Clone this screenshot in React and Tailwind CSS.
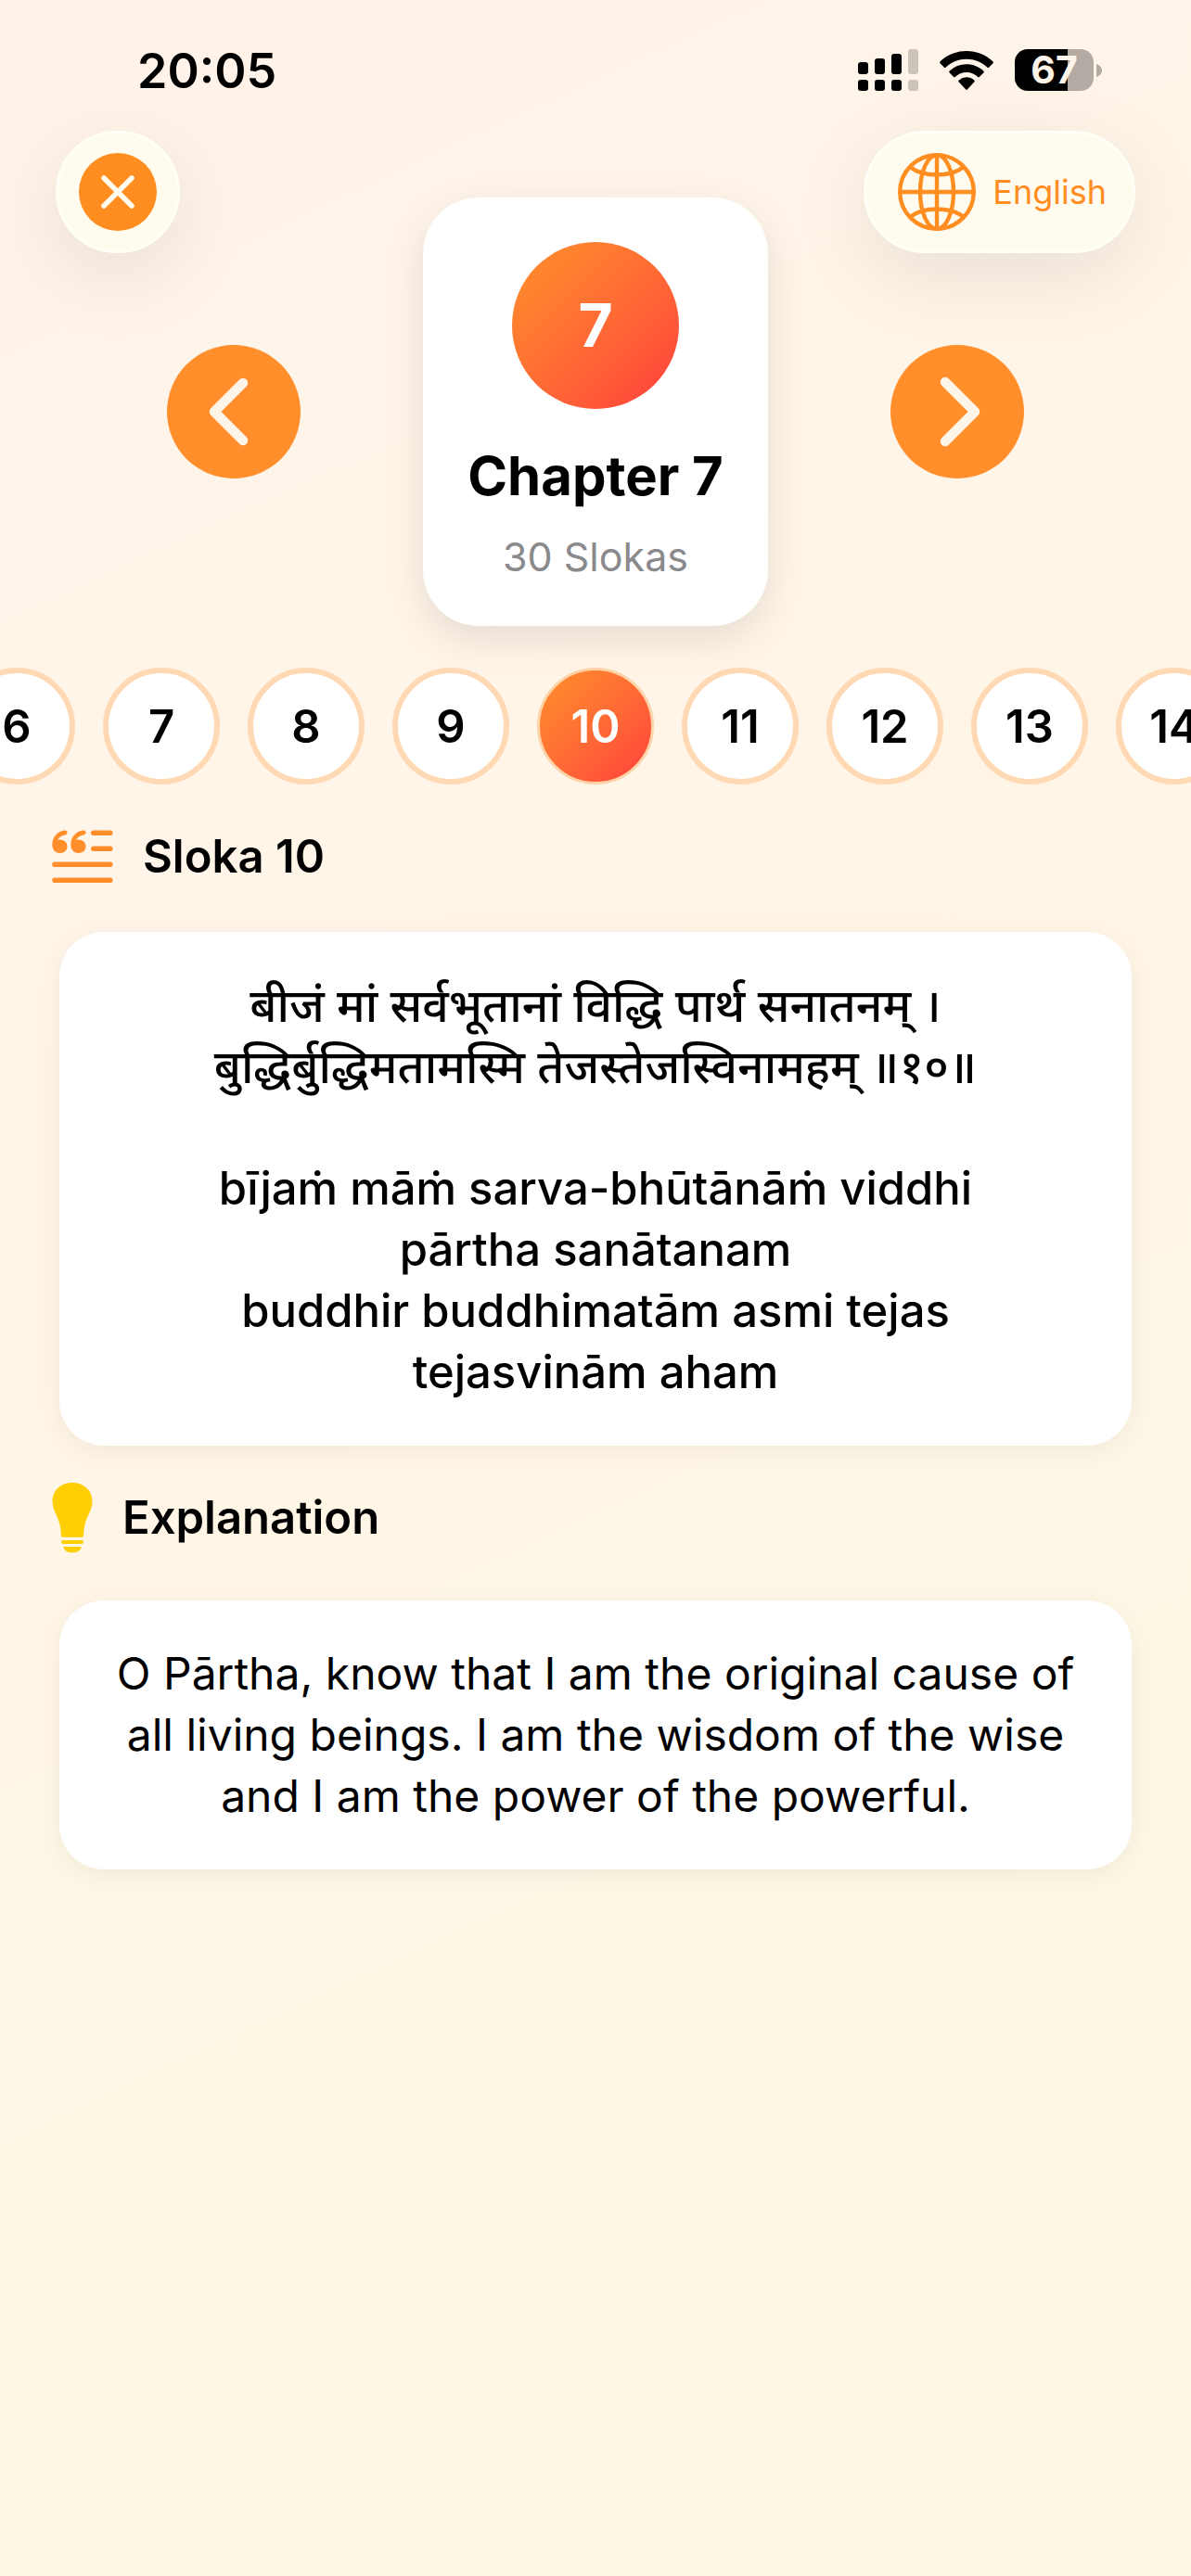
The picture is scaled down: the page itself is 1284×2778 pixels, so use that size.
import React, { useState } from "react";

const CHAPTER = { number: 7, slokas: 30 };
const SLOKA_NUMBERS = [6, 7, 8, 9, 10, 11, 12, 13, 14];

const VERSE = [
  "बीजं मां सर्वभूतानां विद्धि पार्थ सनातनम् ।",
  "बुद्धिर्बुद्धिमतामस्मि तेजस्तेजस्विनामहम् ॥१०॥",
];

const TRANSLITERATION = [
  "bījaṁ māṁ sarva-bhūtānāṁ viddhi",
  "pārtha sanātanam",
  "buddhir buddhimatām asmi tejas",
  "tejasvinām aham",
];

function SignalIcon() {
  return (
    <svg width="65" height="45" viewBox="0 0 65 45">
      <rect x="0" y="14" width="11" height="13" rx="3" />
      <rect x="18" y="10" width="11" height="17" rx="3" />
      <rect x="36" y="5" width="11" height="22" rx="3" />
      <rect x="54" y="0" width="11" height="27" rx="3" opacity="0.2" />
      <rect x="0" y="33" width="11" height="12" rx="3" />
      <rect x="18" y="33" width="11" height="12" rx="3" />
      <rect x="36" y="33" width="11" height="12" rx="3" />
      <rect x="54" y="33" width="11" height="12" rx="3" opacity="0.2" />
    </svg>
  );
}

function WifiIcon() {
  return (
    <svg width="58" height="43" viewBox="0 0 58 43">
      <path d="M29 1C40 1 50 5.200 57.300 12.200a1.500 1.500 0 0 1 0 2.200l-4 4a1.500 1.500 0 0 1-2.100 0C45.300 13 37.500 9.700 29 9.700S12.700 13 6.800 18.400a1.500 1.500 0 0 1-2.100 0l-4-4a1.500 1.500 0 0 1 0-2.200C8 5.200 18 1 29 1z" />
      <path d="M29 15.200c7 0 13.500 2.700 18.300 7.200a1.500 1.500 0 0 1 0 2.200l-4.200 4.100a1.500 1.500 0 0 1-2.100 0A17.600 17.600 0 0 0 29 24c-4.600 0-8.800 1.700-12 4.700a1.500 1.500 0 0 1-2.100 0l-4.200-4.100a1.500 1.500 0 0 1 0-2.200A26.600 26.600 0 0 1 29 15.200z" />
      <path d="M29 29.300c3.200 0 6 1.200 8.200 3.100a1.400 1.400 0 0 1 0 2.100l-7.200 7.700a1.400 1.400 0 0 1-2 0l-7.200-7.700a1.400 1.400 0 0 1 0-2.100 12.400 12.400 0 0 1 8.200-3.100z" />
    </svg>
  );
}

function Battery({ level }) {
  return (
    <div className="flex items-center gap-[3px]">
      <div className="flex h-[45px] w-[85px] items-center justify-center rounded-[14px] bg-[linear-gradient(to_right,#000_67%,#b3aba3_67%)] text-[41px] leading-[45px] font-bold text-[#fff4e9]">
        {level}
      </div>
      <svg width="6" height="14" viewBox="0 0 6 14" fill="#b3aba3">
        <path d="M0 0c3.600 1.200 6 4 6 7s-2.400 5.800-6 7z" />
      </svg>
    </div>
  );
}

function CloseIcon() {
  return (
    <svg width="84" height="84" viewBox="0 0 84 84">
      <circle cx="42" cy="42" r="42" fill="#ff8d1f" />
      <path d="M27 27l30 30M57 27L27 57" stroke="#fffbee" strokeWidth="5.500" strokeLinecap="round" />
    </svg>
  );
}

function GlobeIcon() {
  return (
    <svg width="84" height="84" viewBox="0 0 84 84" fill="none" stroke="#ff8d1f" strokeWidth="4.400">
      <circle cx="42" cy="42" r="39.800" />
      <ellipse cx="42" cy="42" rx="18" ry="39.800" />
      <path d="M42 2v80M2 42h80" />
      <path d="M13 15c7 5.500 17 8.500 29 8.500S64 20.500 71 15M13 69c7-5.500 17-8.500 29-8.500S64 63.500 71 69" />
    </svg>
  );
}

function ChevronCircle({ direction }) {
  return (
    <svg width="144" height="144" viewBox="0 0 144 144" fill="none">
      <circle cx="72" cy="72" r="72" fill="#ff8e2b" />
      <path
        d={direction === "left" ? "M82 41L51 72l31 31" : "M59 40l32 32-32 32"}
        stroke="#fff4e8"
        strokeWidth="10.500"
        strokeLinecap="round"
        strokeLinejoin="round"
      />
    </svg>
  );
}

function QuoteIcon() {
  return (
    <svg width="66" height="58" viewBox="0 0 66 58" fill="#ff8e2b">
      <path d="M8.500 10.600C13 10.600 16.500 13.600 16.500 17.800c0 4.200-3.400 7.200-8 7.200C3.400 25 .3 21.300.3 15.800.3 8 5.600 2 13 .6c2-.4 3.500.4 3.600 2 .1 1.500-.8 2.500-2.600 2.900C10 6.300 7 8.300 6 11.100c.7-.4 1.500-.5 2.500-.5z" />
      <path d="M28.500 10.600c4.500 0 8 3 8 7.200 0 4.200-3.400 7.200-8 7.200-5.100 0-8.200-3.700-8.200-9.200C20.300 8 25.600 2 33 .6c2-.4 3.500.4 3.600 2 .1 1.500-.8 2.500-2.600 2.900-4 .8-7 2.800-8 5.600.7-.4 1.500-.5 2.500-.5z" />
      <rect x="42" y="0.500" width="23.500" height="5.600" rx="2.800" />
      <rect x="42" y="17.500" width="23.500" height="5.600" rx="2.800" />
      <rect x="0.300" y="34.500" width="65.200" height="5.600" rx="2.800" />
      <rect x="0.300" y="51.500" width="65.200" height="5.600" rx="2.800" />
    </svg>
  );
}

function BulbIcon() {
  return (
    <svg width="44" height="76" viewBox="0 0 44 76" fill="#ffce05">
      <path d="M22 0C34.500 0 43.500 8.500 43.500 20c0 6-2 10-4.500 15.500-3.400 7.400-4.600 13-5 21.500-.1 1.200-.7 1.700-1.700 1.700H11.700c-1 0-1.600-.5-1.700-1.700-.4-8.500-1.600-14.100-5-21.500C2.500 30 .5 26 .5 20 .5 8.500 9.500 0 22 0z" />
      <rect x="10" y="62" width="24" height="4" rx="2" />
      <path d="M12.200 69h19.600c-1 4-4 6.200-7.800 6.200h-4c-3.800 0-6.800-2.200-7.800-6.200z" />
    </svg>
  );
}

function SectionHeader({ icon, title }) {
  return (
    <div className="mb-[51px] flex items-center gap-8 pl-14">
      {icon}
      <h2 className="text-[49px] leading-[60px] font-semibold">{title}</h2>
    </div>
  );
}

function TextCard({ children }) {
  return (
    <div className="mx-16 rounded-[48px] bg-white px-[46px] py-[46px] text-center leading-[66px] shadow-[0_6px_30px_rgba(0,0,0,0.06)]">
      {children}
    </div>
  );
}

export default function App() {
  const [selected, setSelected] = useState(10);

  return (
    <div className="min-h-screen overflow-hidden bg-[linear-gradient(155deg,#fff2ea_0%,#fff4e9_12%,#fff5e7_40%,#fff7e5_65%,#fff8e5_100%)] font-[Inter,'Noto_Sans','Noto_Sans_Devanagari',sans-serif] text-black">
      {/* Status bar */}
      <div className="flex h-[141px] items-center justify-between pt-[10px] pr-24 pl-[148px]">
        <span className="pt-[2px] text-[52px] leading-[60px] font-semibold">20:05</span>
        <div className="flex items-center gap-[23px]">
          <SignalIcon />
          <WifiIcon />
          <Battery level={67} />
        </div>
      </div>

      {/* Chapter picker */}
      <div className="grid grid-cols-[1fr_auto_1fr] px-12">
        <div className="flex flex-col items-center gap-[99px]">
          <button
            aria-label="Close"
            className="ml-3 flex h-[132px] w-[134px] items-center justify-center self-start rounded-full border-3 border-[#fffff8] bg-[#fffbee] shadow-[0_24px_90px_rgba(0,0,0,0.09)]"
          >
            <CloseIcon />
          </button>
          <button aria-label="Previous chapter" className="rounded-full">
            <ChevronCircle direction="left" />
          </button>
        </div>

        <div className="mt-[72px] flex flex-col items-center rounded-[60px] bg-white px-12 py-12 shadow-[0_15px_45px_rgba(0,0,0,0.1)]">
          <div className="flex size-[180px] items-center justify-center rounded-full bg-linear-to-br from-[#ff9029] to-[#ff3b3b] text-[64px] font-bold text-white">
            {CHAPTER.number}
          </div>
          <h1 className="mt-9 text-[58px] leading-[72px] font-bold whitespace-nowrap">
            Chapter {CHAPTER.number}
          </h1>
          <p className="mt-6 text-[43px] leading-[54px] text-[#8a8a8d]">{CHAPTER.slokas} Slokas</p>
        </div>

        <div className="flex flex-col items-center gap-[99px]">
          <button className="mr-3 flex h-[132px] items-center gap-[18px] self-end rounded-full border-3 border-[#fffff8] bg-[#fffbee] pr-7 pl-[34px] text-[36px] text-[#ff8d1f] shadow-[0_24px_90px_rgba(0,0,0,0.09)]">
            <GlobeIcon />
            English
          </button>
          <button aria-label="Next chapter" className="rounded-full">
            <ChevronCircle direction="right" />
          </button>
        </div>
      </div>

      {/* Sloka numbers */}
      <div className="mt-[45px] flex justify-center gap-[30px] overflow-hidden">
        {SLOKA_NUMBERS.map((n) => (
          <button
            key={n}
            onClick={() => setSelected(n)}
            className={`flex size-[126px] shrink-0 items-center justify-center rounded-full pt-[2px] text-[49px] font-semibold ${
              n === selected
                ? "border-3 border-[#ffd3a8] bg-linear-to-br from-[#ff9029] to-[#ff3b3b] bg-origin-border text-white"
                : "border-6 border-[#ffd8b4] bg-white text-black"
            }`}
          >
            {n}
          </button>
        ))}
      </div>

      <section className="mt-12">
        <SectionHeader icon={<QuoteIcon />} title={`Sloka ${selected}`} />
        <TextCard>
          <div lang="sa" className="text-[50px] leading-[66px] font-medium">
            {VERSE.map((line) => (
              <p key={line}>{line}</p>
            ))}
          </div>
          <div className="mt-[66px] text-[49px] leading-[66px] font-medium">
            {TRANSLITERATION.map((line) => (
              <p key={line}>{line}</p>
            ))}
          </div>
        </TextCard>
      </section>

      <section className="mt-10">
        <SectionHeader icon={<BulbIcon />} title="Explanation" />
        <TextCard>
          <p className="text-[48px] leading-[66px]">
            O Pārtha, know that I am the original cause of all living beings. I am the wisdom of the
            wise and I am the power of the powerful.
          </p>
        </TextCard>
      </section>
    </div>
  );
}
